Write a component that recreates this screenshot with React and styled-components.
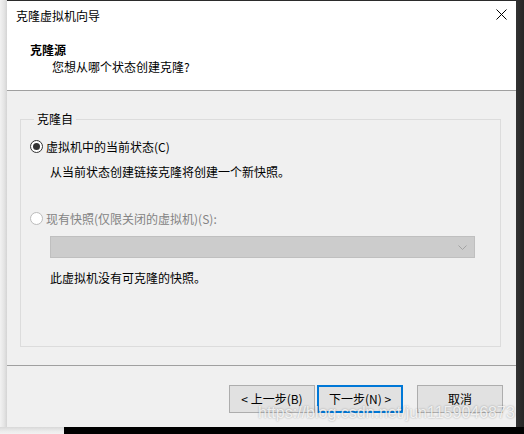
import React from 'react';
import styled, { createGlobalStyle } from 'styled-components';

const GlobalStyle = createGlobalStyle`
	* {
		box-sizing: border-box;
	}

	body {
		margin: 0;
		background: #000;
		font-family: 'Noto Sans CJK SC', 'Noto Sans', sans-serif;
		font-size: 12px;
		color: #000;
	}
`;

const Screen = styled.div`
	position: relative;
	width: 524px;
	height: 434px;
	display: flex;
	flex-direction: column;
	background: #000;
	overflow: hidden;
`;

const Row = styled.div`
	display: flex;
	height: ${(p) => p.h}px;
`;

const Shade = styled.div`
	width: ${(p) => p.w}px;
	background: ${(p) => p.bg};
`;

const Dialog = styled.div`
	width: 509px;
	display: flex;
	flex-direction: column;
	border-top: 1px solid #2b2b2b;
	background: #f0f0f0;
`;

const Header = styled.header`
	height: 89px;
	background: #fff;
	border-bottom: 1px solid #a0a0a0;
	display: flex;
	flex-direction: column;
	box-sizing: content-box;

	.titlebar {
		height: 30px;
		display: flex;
		align-items: center;
		justify-content: space-between;
		padding: 0 9px 0 9px;
		line-height: 16px;

		svg {
			margin-top: -3px;
		}
	}

	h1 {
		margin: 11px 0 0 23px;
		font-size: 12px;
		font-weight: 700;
		line-height: 16px;
	}

	p {
		margin: 1px 0 0 45px;
		line-height: 16px;
	}
`;

const Body = styled.main`
	height: 274px;
	padding: 20px 15px 18px 13px;
`;

const Group = styled.fieldset`
	margin: 0;
	height: 236px;
	border: 1px solid #dcdcdc;
	padding: 11px 10px 0 9px;

	legend {
		margin-left: 4px;
		padding: 0 3px 0 3px;
		line-height: 16px;
	}
`;

const Option = styled.label`
	display: flex;
	align-items: center;
	height: 16px;
	margin-top: ${(p) => p.gap || 0}px;
	color: ${(p) => (p.disabled ? '#838383' : '#000')};
`;

const Radio = styled.span`
	width: 13px;
	height: 13px;
	border-radius: 50%;
	border: 1px solid ${(p) => (p.disabled ? '#bcbcbc' : '#333')};
	background: #fff;
	margin-right: 3px;
	display: flex;
	align-items: center;
	justify-content: center;

	&::after {
		content: '';
		width: 7px;
		height: 7px;
		border-radius: 50%;
		background: ${(p) => (p.checked ? '#333' : 'transparent')};
	}
`;

const Hint = styled.div`
	margin: ${(p) => p.gap}px 0 0 20px;
	line-height: 16px;
`;

const Select = styled.div`
	margin: 10px 15px 0 20px;
	height: 22px;
	background: #cccccc;
	border: 1px solid #bfbfbf;
	display: flex;
	align-items: center;
	justify-content: flex-end;
	padding-right: 7px;
`;

const Footer = styled.footer`
	flex: 1;
	border-top: 1px solid #a0a0a0;
	display: flex;
	justify-content: flex-end;
	align-items: flex-start;
	padding: 19px 13px 0 0;
`;

const Button = styled.button`
	width: ${(p) => p.w || 86}px;
	height: 28px;
	margin-left: ${(p) => p.gap || 0}px;
	font-family: inherit;
	font-size: 12px;
	color: #000;
	background: #e1e1e1;
	border: ${(p) => (p.primary ? '2px solid #0078d7' : '1px solid #adadad')};
	padding: 0;
	line-height: 16px;
`;

// csdn watermark baked into the screenshot
const Watermark = styled.div`
	position: absolute;
	left: 258px;
	top: 403px;
	font-family: 'Liberation Sans', Arial, sans-serif;
	font-size: 16px;
	line-height: 20px;
	color: rgba(255, 255, 255, 0.8);
	text-shadow: 0 0 2px rgba(0, 0, 0, 0.35);
	white-space: nowrap;
	pointer-events: none;
`;

const CloseIcon = () => (
	<svg width='11' height='11' viewBox='0 0 11 11'>
		<path d='M0.5 0.5 L10.5 10.5 M10.5 0.5 L0.5 10.5' stroke='#000' strokeWidth='1' />
	</svg>
);

const Chevron = () => (
	<svg width='9' height='5' viewBox='0 0 9 5'>
		<path d='M0.5 0.5 L4.5 4.5 L8.5 0.5' fill='none' stroke='#a3a3a3' strokeWidth='1' />
	</svg>
);

const App = () => (
	<>
		<GlobalStyle />
		<Screen>
			<Row h={427}>
				<Shade w={7} bg='linear-gradient(to right, #f2f2f2, #e4e4e4 60%, #d4d4d4)' />
				<Dialog>
					<Header>
						<div className='titlebar'>
							<span>克隆虚拟机向导</span>
							<CloseIcon />
						</div>
						<h1>克隆源</h1>
						<p>您想从哪个状态创建克隆?</p>
					</Header>
					<Body>
						<Group>
							<legend>克隆自</legend>
							<Option>
								<Radio checked />
								虚拟机中的当前状态(C)
							</Option>
							<Hint gap={10}>从当前状态创建链接克隆将创建一个新快照。</Hint>
							<Option gap={30} disabled>
								<Radio disabled />
								现有快照(仅限关闭的虚拟机)(S):
							</Option>
							<Select>
								<Chevron />
							</Select>
							<Hint gap={12}>此虚拟机没有可克隆的快照。</Hint>
						</Group>
					</Body>
					<Footer>
						<Button type='button'>&lt; 上一步(B)</Button>
						<Button type='button' primary gap={2} w={86}>
							下一步(N) &gt;
						</Button>
						<Button type='button' gap={14}>
							取消
						</Button>
					</Footer>
				</Dialog>
				<Shade w={8} bg='linear-gradient(to right, #333, #262626)' />
			</Row>
			<Row h={7}>
				<Shade w={64} bg='linear-gradient(to bottom, #d8d8d8, #ececec 60%, #f2f2f2)' />
			</Row>
			<Watermark>https://blog.csdn.net/jun1159046873</Watermark>
		</Screen>
	</>
);

export default App;
